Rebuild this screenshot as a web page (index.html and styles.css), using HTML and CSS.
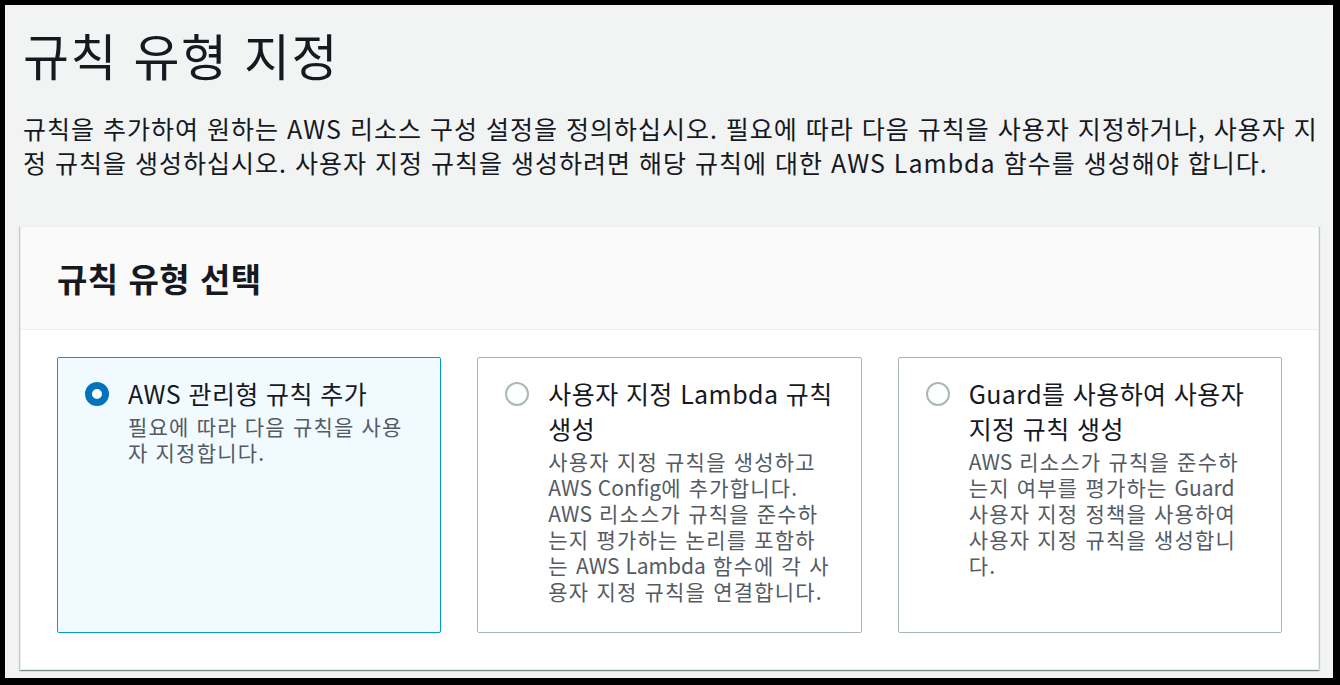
FILE: index.html
```html
<!DOCTYPE html>
<html lang="ko">
  <head>
    <meta charset="utf-8" />
    <link rel="stylesheet" href="styles.css">
  </head>
  <body>
    <div class="frame">
      <div class="page">
        <h1 class="page-title">규칙 유형 지정</h1>
        <p class="page-desc">
          규칙을 추가하여 원하는 AWS 리소스 구성 설정을 정의하십시오. 필요에 따라 다음 규칙을 사용자 지정하거나, 사용자 지정 규칙을 생성하십시오. 사용자 지정 규칙을 생성하려면 해당 규칙에 대한 AWS Lambda 함수를 생성해야 합니다.
        </p>

        <div class="container">
          <div class="container-header">
            <h2>규칙 유형 선택</h2>
          </div>

          <div class="container-body">
            <div class="tiles">
              <div class="tile selected">
                <span class="radio checked"></span>
                <div class="tile-text">
                  <div class="tile-title">AWS 관리형 규칙 추가</div>
                  <div class="tile-desc">필요에 따라 다음 규칙을 사용자 지정합니다.</div>
                </div>
              </div>

              <div class="tile">
                <span class="radio"></span>
                <div class="tile-text">
                  <div class="tile-title">사용자 지정 Lambda 규칙 생성</div>
                  <div class="tile-desc">
                    사용자 지정 규칙을 생성하고 <span class="en">AWS Config</span>에 추가합니다. <span class="en">AWS</span> 리소스가 규칙을 준수하는지 평가하는 논리를 포함하는 <span class="en">AWS Lambda</span> 함수에 각 사용자 지정 규칙을 연결합니다.
                  </div>
                </div>
              </div>

              <div class="tile">
                <span class="radio"></span>
                <div class="tile-text">
                  <div class="tile-title">Guard를 사용하여 사용자 지정 규칙 생성</div>
                  <div class="tile-desc">
                    <span class="en">AWS</span> 리소스가 규칙을 준수하는지 여부를 평가하는 <span class="en">Guard</span> 사용자 지정 정책을 사용하여 사용자 지정 규칙을 생성합니다.
                  </div>
                </div>
              </div>
            </div>
          </div>
        </div>
      </div>
    </div>
  </body>
</html>
```

FILE: styles.css
```css
html,
body {
  margin: 0;
  padding: 0;
  background: #000;
}

body {
  font-family: "Noto Sans CJK KR", "Noto Sans", sans-serif;
  color: #16191f;
}

.frame {
  box-sizing: border-box;
  width: 1340px;
  height: 685px;
  overflow: hidden;
  border-style: solid;
  border-color: #000;
  border-width: 5px 7px 7px 5px;
  background: #f2f3f3;
}

.page {
  padding: 0 14px 0 15px;
}

.page-title {
  margin: 0;
  padding: 20px 0 0 3px;
  font-size: 50px;
  line-height: 58px;
  font-weight: 400;
  letter-spacing: 1.5px;
}

.page-desc {
  margin: 28px 0 0 0;
  padding-left: 3px;
  font-size: 25px;
  line-height: 34px;
  letter-spacing: 1px;
}

.container {
  margin-top: 47px;
  background: #fff;
  border: 1px solid #eaeded;
  box-shadow: 0 1px 1px 0 rgba(0, 28, 36, 0.3),
    1px 1px 1px 0 rgba(0, 28, 36, 0.15), -1px 1px 1px 0 rgba(0, 28, 36, 0.15);
}

.container-header {
  display: flex;
  align-items: center;
  height: 102px;
  padding: 0 36px;
  background: #fafafa;
  border-bottom: 1px solid #eaeded;
}

.container-header h2 {
  margin: 0;
  font-size: 33px;
  line-height: 40px;
  font-weight: 700;
  letter-spacing: 0.5px;
}

.container-body {
  padding: 27px 36px 36px;
}

.tiles {
  display: grid;
  grid-template-columns: repeat(3, 1fr);
  gap: 36px;
}

.tile {
  display: flex;
  gap: 19px;
  padding: 18px 20px 28px 27px;
  border: 1px solid #aab7b8;
  border-radius: 2px;
  background: #fff;
}

.tile.selected {
  border-color: #00a1c9;
  background: #f1faff;
}

.radio {
  flex: none;
  box-sizing: border-box;
  width: 24px;
  height: 24px;
  margin-top: 6px;
  border: 2px solid #aab7b8;
  border-radius: 50%;
  background: #fff;
}

.radio.checked {
  border: 7px solid #0073bb;
}

.tile-text {
  min-width: 0;
}

.tile-title {
  font-size: 25px;
  line-height: 35px;
  letter-spacing: 0.4px;
}

.tile-desc {
  margin-top: 2px;
  padding-right: 10px;
  font-size: 21px;
  line-height: 26px;
  letter-spacing: 1.2px;
  color: #545b64;
}

.tile-desc .en {
  display: inline-block;
  letter-spacing: 0;
}
```
